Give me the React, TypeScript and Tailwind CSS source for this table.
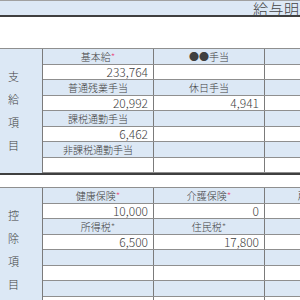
type Cell = { text?: string; mark?: 'red' | 'dark' };

type RowProps = {
  cells: Cell[];
  kind: 'label' | 'value';
  h: string;
};

function Row({ cells, kind, h }: RowProps) {
  const bg = kind === 'label' ? 'bg-[#dce8f5]' : 'bg-white';
  return (
    <div className={'flex border-b border-[#8f8f8f] ' + bg}>
      {cells.map((c, i) => (
        <div
          key={i}
          className={
            'flex w-[111px] shrink-0 items-center border-r border-[#7b7b7b] ' +
            h +
            (kind === 'label'
              ? ' justify-center text-[10px]'
              : ' justify-end pr-[5px] text-[12px]')
          }
        >
          {c.text && (
            <span className="whitespace-nowrap leading-none">
              {c.text}
              {c.mark === 'red' && <span className="text-[10px] text-[#e8457c]">*</span>}
              {c.mark === 'dark' && <span className="text-[10px] text-[#666]">*</span>}
            </span>
          )}
        </div>
      ))}
    </div>
  );
}

type SectionProps = {
  title: string[];
  rows: Cell[][];
  bottom?: string;
};

function Section({ title, rows, bottom = '' }: SectionProps) {
  return (
    <div className={'flex border-t border-[#8f8f8f] ' + bottom}>
      <div className="flex w-[43px] shrink-0 flex-col justify-center border-r border-[#7b7b7b] bg-[#dce8f5] pl-[8px] text-[11px]">
        {title.map((t) => (
          <div key={t} className="flex h-[23px] items-center">
            {t}
          </div>
        ))}
      </div>
      <div className="flex flex-col">
        {rows.map((r, i) => (
          <Row
            key={i}
            cells={r}
            kind={i % 2 === 0 ? 'label' : 'value'}
            h={i % 2 === 0 ? 'h-[15px]' : 'h-[14px]'}
          />
        ))}
      </div>
    </div>
  );
}

const blank: Cell[] = [{}, {}, {}];

const pay: Cell[][] = [
  [{ text: '基本給', mark: 'red' }, { text: '●●手当' }, {}],
  [{ text: '233,764' }, {}, {}],
  [{ text: '普通残業手当' }, { text: '休日手当' }, {}],
  [{ text: '20,992' }, { text: '4,941' }, {}],
  [{ text: '課税通勤手当' }, {}, {}],
  [{ text: '6,462' }, {}, {}],
  [{ text: '非課税通勤手当' }, {}, {}],
  blank,
];

const deduct: Cell[][] = [
  [
    { text: '健康保険', mark: 'red' },
    { text: '介護保険', mark: 'red' },
    { text: '雇用保険', mark: 'red' },
  ],
  [{ text: '10,000' }, { text: '0' }, {}],
  [{ text: '所得税', mark: 'dark' }, { text: '住民税', mark: 'dark' }, {}],
  [{ text: '6,500' }, { text: '17,800' }, {}],
  blank,
  blank,
  blank,
  blank,
];

export default function App() {
  return (
    <div
      className="h-[300px] w-[300px] overflow-hidden bg-white font-light text-[#404040]"
      style={{ fontFamily: '"Noto Sans CJK JP", sans-serif' }}
    >
      {/* title bar */}
      <div className="flex h-[17px] items-center border-t border-b-2 border-t-[#a0a0a0] border-b-[#3f3f3f] bg-[#dce8f5] pl-[253px]">
        <span className="whitespace-nowrap text-[15px] leading-none tracking-[0.5px] text-[#444]">
          給与明細書
        </span>
      </div>
      <div className="h-[31px]" />
      <Section
        title={['支', '給', '項', '目']}
        rows={pay}
        bottom="border-b-2 border-b-[#3f3f3f]"
      />
      <div className="h-[12px]" />
      <Section title={['控', '除', '項', '目']} rows={deduct} />
    </div>
  );
}
